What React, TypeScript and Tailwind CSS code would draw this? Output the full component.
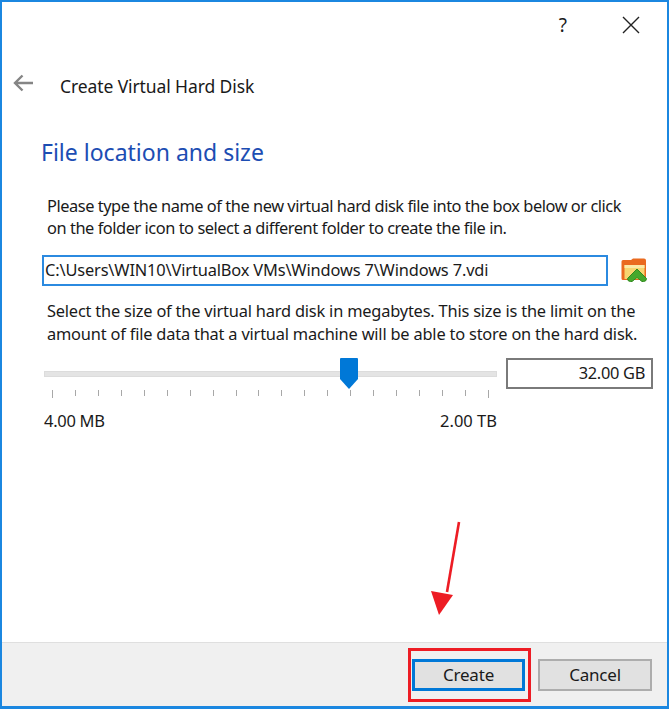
import React from 'react';

const TICK_COUNT = 20;

const FolderIcon = () => (
  <svg width="28" height="28" viewBox="0 0 28 28">
    <path d="M1.5 4.5 Q1.5 3 3 3 H11 L13 1.5 H24 Q26 1.5 26 3.5 V23 H3 Q1.5 23 1.5 21.5 Z" fill="#ea6a1f" />
    <path d="M4.5 8 H24.5 V22 H4.5 Z" fill="#f7d56f" />
    <path d="M4.5 8 H24.5 V11 H4.5 Z" fill="#fbe9a6" />
    <path d="M17 12 L26.5 21.5 Q26.5 24.5 23.5 24.5 H22 L17 20.5 L12 24.5 H10.5 Q7.5 24.5 7.5 21.5 Z" fill="#45a82c" stroke="#2f8a1e" strokeWidth="1" />
  </svg>
);

const App: React.FC = () => {
  return (
    <div
      className="w-[669px] h-[709px] flex flex-col bg-white border-2 border-b-[3px] border-[#1b87e0] text-[#1a1a1a] relative overflow-hidden"
      style={{ fontFamily: '"Noto Sans", "Open Sans", sans-serif' }}
    >
      {/* Title bar */}
      <div className="h-[46px] flex items-center justify-end shrink-0">
        <span className="text-[19px] mr-[55px] mt-[1px]">?</span>
        <svg width="18" height="18" viewBox="0 0 18 18" className="mr-[27px]">
          <path d="M1 1 L17 17 M17 1 L1 17" stroke="#222" strokeWidth="1.4" />
        </svg>
      </div>

      {/* Wizard header */}
      <div className="h-[48px] flex items-center pl-[11px] shrink-0 mt-[11px]">
        <svg width="21" height="18" viewBox="0 0 21 18">
          <path d="M20 9 H2 M9.5 1.5 L2 9 L9.5 16.5" fill="none" stroke="#858585" strokeWidth="2.4" />
        </svg>
        <span className="ml-[26px] mt-[6px] text-[17.5px] tracking-[-0.1px]">Create Virtual Hard Disk</span>
      </div>

      {/* Page */}
      <div className="flex-1 flex flex-col pl-[42px] pr-[13px] min-h-0">
        <h1 className="mt-[28px] ml-[-3px] text-[23px] leading-[34px] tracking-[0px] text-[#1c4db3]">File location and size</h1>
        <p className="mt-[26px] ml-[3px] text-[16.4px] leading-[22px] tracking-[-0.46px] whitespace-nowrap">
          Please type the name of the new virtual hard disk file into the box below or click
          <br />
          on the folder icon to select a different folder to create the file in.
        </p>

        <div className="mt-[16px] flex items-center">
          <div className="ml-[-2px] w-[566px] h-[31px] border-2 border-[#2b8ae0] flex items-center pl-[1px] text-[16.4px] tracking-[-0.15px] whitespace-nowrap">
            C:\Users\WIN10\VirtualBox VMs\Windows 7\Windows 7.vdi
          </div>
          <div className="ml-[12px]">
            <FolderIcon />
          </div>
        </div>

        <p className="mt-[13px] ml-[3px] text-[16.4px] leading-[23px] tracking-[-0.2px] whitespace-nowrap">
          Select the size of the virtual hard disk in megabytes. This size is the limit on the
          <br />
          amount of file data that a virtual machine will be able to store on the hard disk.
        </p>

        <div className="mt-[13px] flex items-start">
          <div className="w-[453px] relative">
            <div className="h-[31px] flex items-center">
              <div className="w-full h-[6px] bg-[#e4e4e4] border border-[#dcdcdc]" />
            </div>
            <div className="absolute left-[296px] top-0 w-[18px]">
              <svg width="18" height="31" viewBox="0 0 18 31" className="block">
                <path d="M0 1 Q0 0 1 0 H17 Q18 0 18 1 V21 L9 31 L0 21 Z" fill="#0078d7" />
              </svg>
            </div>
            <div className="flex justify-between px-[8px] mt-[1px]">
              {Array.from({ length: TICK_COUNT }).map((_, i) => (
                <div key={i} className={`w-px bg-[#a8a8a8] ${i === 0 || i === TICK_COUNT - 1 ? 'h-[8px]' : 'h-[6px]'}`} />
              ))}
            </div>
            <div className="flex justify-between mt-[12px] text-[16.5px] leading-[22px] tracking-[-0.3px]">
              <span>4.00 MB</span>
              <span className="tracking-[0px]">2.00 TB</span>
            </div>
          </div>
          <div className="ml-[9px] w-[147px] h-[31px] border-2 border-[#7a7a7a] flex items-center justify-end pr-[6px] text-[16.4px] tracking-[-0.3px]">
            32.00 GB
          </div>
        </div>
      </div>

      {/* Footer */}
      <div className="h-[64px] shrink-0 bg-[#f0f0f0] border-t border-[#dfdfdf] flex items-center justify-end gap-[13px] pr-[15px]">
        <button className="w-[113px] h-[32px] bg-[#e1e1e1] border-[3px] border-[#0078d7] text-[17px] tracking-[-0.2px]">Create</button>
        <button className="w-[114px] h-[32px] bg-[#e1e1e1] border-2 border-[#adadad] text-[17px] tracking-[-0.2px]">Cancel</button>
      </div>

      {/* Red annotation over the screenshot */}
      <div className="absolute left-[406px] top-[646px] w-[123px] h-[54px] border-[3px] border-[#ed1c24]" />
      <svg width="40" height="100" viewBox="0 0 40 100" className="absolute left-[426px] top-[518px]">
        <path d="M31 2 L19 72" stroke="#ed1c24" strokeWidth="2.6" fill="none" />
        <path d="M3 71 L25 75 L11 95 Z" fill="#ed1c24" />
      </svg>
    </div>
  );
};

export default App;
